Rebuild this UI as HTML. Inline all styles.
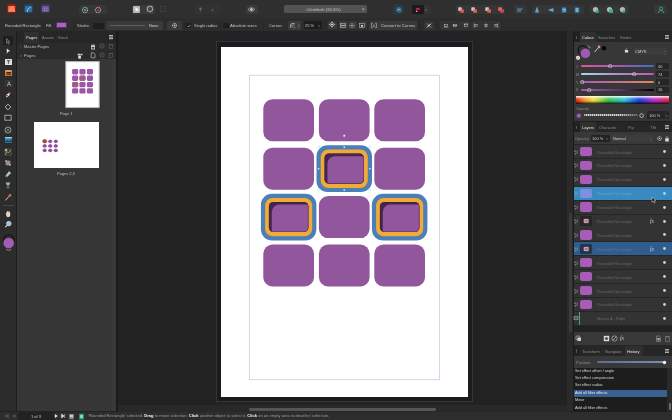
<!DOCTYPE html><html><head><meta charset="utf-8"><style>
html,body{margin:0;padding:0;width:672px;height:420px;overflow:hidden;background:#222;font-family:"Liberation Sans",sans-serif}
div,span,svg{position:absolute;box-sizing:border-box}
.t{white-space:pre;will-change:transform}
</style></head><body>
<div style="left:0px;top:0px;width:672px;height:18px;background:#2f2f2f;"></div>
<div style="left:0px;top:17.5px;width:672px;height:1px;background:#1d1d1d;"></div>
<div style="left:6.8px;top:4.2px;width:9.6px;height:9.2px;background:#9a1c1a;border-radius:1.5px"></div>
<div style="left:8.2px;top:5.6px;width:6.8px;height:6.6px;background:#e8703e;border-radius:0.5px"></div>
<svg style="left:8.6px;top:5.9px;" width="6.1" height="6.1" viewBox="0 0 6.1 6.1"><path d="M0 6 L3 0 L6 6 M1.5 3 L4.5 3 M1 4.5 L5 4.5" stroke="#ffb080" stroke-width="0.6" fill="none"/></svg>
<div style="left:24px;top:4.2px;width:9.4px;height:9.2px;background:#1f4466;border-radius:1.5px"></div>
<div style="left:25.3px;top:5.5px;width:6.8px;height:6.6px;background:#346f9c;border-radius:0.8px"></div>
<svg style="left:25.5px;top:5.5px;" width="6.5" height="6.5" viewBox="0 0 6.5 6.5"><path d="M1 6 Q1 2 5 1" stroke="#9fd5f5" stroke-width="0.8" fill="none"/></svg>
<div style="left:40.8px;top:4.2px;width:9.4px;height:9.2px;background:#3e3560;border-radius:1.5px"></div>
<div style="left:42.1px;top:5.5px;width:6.8px;height:6.6px;background:#5e4c86;border-radius:0.8px"></div>
<svg style="left:42px;top:5.5px;" width="7" height="6.5" viewBox="0 0 7 6.5"><path d="M0 2.2H7M0 4.4H7M2.3 0V6.5M4.6 0V6.5" stroke="#a98bd0" stroke-width="0.5"/></svg>
<div style="left:79px;top:4.8px;width:27.5px;height:9px;background:#373737;border-radius:1.5px"></div>
<svg style="left:81px;top:5.5px;" width="8" height="8" viewBox="0 0 8 8"><circle cx="4" cy="4" r="2.6" fill="none" stroke="#a8b8b0" stroke-width="1.1" stroke-dasharray="1 0.6"/><circle cx="4" cy="4" r="1.3" fill="#3a9c78"/></svg>
<svg style="left:94.3px;top:5.5px;" width="8" height="8" viewBox="0 0 8 8"><circle cx="4" cy="4" r="2.6" fill="none" stroke="#b8a8b0" stroke-width="1.1" stroke-dasharray="1 0.6"/><circle cx="4" cy="4" r="1.3" fill="#983048"/></svg>
<div style="left:131.8px;top:4.8px;width:23px;height:9px;background:#3a3a3a;border-radius:1.5px"></div>
<div style="left:133px;top:5.6px;width:7.4px;height:7.4px;background:#b8b8b8;border-radius:1px"></div>
<svg style="left:133.7px;top:6.2px;" width="6" height="6.5" viewBox="0 0 6 6.5"><path d="M1.5 1.2 L4.8 3.4 L3.3 3.8 L4.2 5.3 L1.5 4.8Z" fill="#f8f8f8"/></svg>
<div style="left:145.6px;top:5.4px;width:7.8px;height:7.8px;background:#444;border-radius:1px"></div>
<svg style="left:145.5px;top:5.3px;" width="8" height="8" viewBox="0 0 8 8"><circle cx="4" cy="4" r="2.7" fill="none" stroke="#d0d0d0" stroke-width="1.1" stroke-dasharray="1 0.5"/><circle cx="4" cy="4" r="1.5" fill="#4a4a4a"/></svg>
<svg style="left:159px;top:5.3px;" width="8" height="8" viewBox="0 0 8 8"><rect x="1.5" y="1.5" width="5" height="5" fill="none" stroke="#404040" stroke-width="0.8"/></svg>
<div style="left:194px;top:4.8px;width:25.5px;height:9px;background:#323232;border-radius:1.5px"></div>
<svg style="left:196.5px;top:5.5px;" width="7" height="7" viewBox="0 0 7 7"><circle cx="3.5" cy="2.8" r="1.3" fill="#6a6a6a"/><path d="M3.5 3.5V6" stroke="#6a6a6a" stroke-width="0.6"/></svg>
<svg style="left:209px;top:5.5px;" width="7" height="7" viewBox="0 0 7 7"><circle cx="3.5" cy="4.2" r="1" fill="#5c5c5c"/></svg>
<div style="left:245.5px;top:5px;width:12.5px;height:9px;background:#3b3b3b;border-radius:1.5px"></div>
<svg style="left:247px;top:6px;" width="9" height="7" viewBox="0 0 9 7"><path d="M1 3.5 Q4.5 0 8 3.5 Q4.5 7 1 3.5Z" fill="none" stroke="#c8c8c8" stroke-width="0.6"/><circle cx="4.5" cy="3.5" r="1.2" fill="#e0e0e0"/></svg>
<div style="left:283.5px;top:5.2px;width:83px;height:8.2px;background:#535353;border-radius:1.5px"></div>
<span class="t" style="left:305.5px;top:7px;font-size:4.15px;line-height:5px;color:#c4c4c4;font-weight:normal;">&lt;Untitled&gt; (65.6%)</span>
<span class="t" style="left:362px;top:7px;font-size:4.5px;line-height:5px;color:#b8b8b8;font-weight:normal;">×</span>
<div style="left:393.4px;top:5px;width:10.5px;height:9px;background:#2e3840;border-radius:1.5px"></div>
<svg style="left:394.5px;top:5.8px;" width="8" height="7.5" viewBox="0 0 8 7.5"><circle cx="4" cy="3.8" r="2.8" fill="#2b6f95"/><path d="M2.8 4.5 L4.2 3 L5.3 4.2" stroke="#cfe6f0" stroke-width="0.6" fill="none"/></svg>
<div style="left:412px;top:5px;width:12px;height:9px;background:#1b1b1b;border-radius:1px"></div>
<svg style="left:413.5px;top:5.8px;" width="8" height="7.5" viewBox="0 0 8 7.5"><path d="M2 5.5 Q1 2 4 1.8 Q6.5 2 5.5 4.2 L4.2 4 Q5 2.8 4 2.9 Q2.6 3 3.4 5.5Z" fill="#d82840"/><path d="M2 5.5 L3.4 5.5" stroke="#eee" stroke-width="0.7"/></svg>
<div style="left:424px;top:5px;width:6px;height:9px;background:#353535;border-radius:0 1px 1px 0"></div>
<span class="t" style="left:425.4px;top:8px;font-size:3.5px;line-height:5px;color:#888;font-weight:normal;">˅</span>
<div style="left:456px;top:4.8px;width:49px;height:9.2px;background:#363636;border-radius:1.5px"></div>
<svg style="left:457px;top:5.5px;" width="8" height="8" viewBox="0 0 8 8"><rect x="1.3" y="1.3" width="3.6" height="3.6" rx="0.6" fill="#c8c8c8"/><rect x="3.3" y="3.2" width="3.6" height="3.6" rx="0.6" fill="#e05a5a"/></svg>
<svg style="left:470.3px;top:5.5px;" width="8" height="8" viewBox="0 0 8 8"><rect x="1.3" y="1.3" width="3.6" height="3.6" rx="0.6" fill="#c8c8c8"/><rect x="3.3" y="3.2" width="3.6" height="3.6" rx="0.6" fill="#e86050"/></svg>
<svg style="left:483.5px;top:5.5px;" width="8" height="8" viewBox="0 0 8 8"><rect x="1.3" y="1.3" width="3.6" height="3.6" rx="0.6" fill="#c8c8c8"/><rect x="3.3" y="3.2" width="3.6" height="3.6" rx="0.6" fill="#f06040"/></svg>
<svg style="left:496.5px;top:5.5px;" width="8" height="8" viewBox="0 0 8 8"><rect x="1.3" y="1.3" width="3.6" height="3.6" rx="0.6" fill="#e06a6a"/><rect x="3.3" y="3.2" width="3.6" height="3.6" rx="0.6" fill="#d04a4a"/></svg>
<div style="left:513.5px;top:4.8px;width:13px;height:9.2px;background:#363636;border-radius:1.5px"></div>
<svg style="left:515.5px;top:5.5px;" width="8" height="8" viewBox="0 0 8 8"><path d="M1.5 1.5V6.5" stroke="#888" stroke-width="0.5"/><rect x="2" y="2.5" width="4.5" height="1.2" fill="#3d9ac8"/><rect x="2" y="4.5" width="3" height="1.2" fill="#3d9ac8"/></svg>
<div style="left:531.5px;top:4.8px;width:52px;height:9.2px;background:#363636;border-radius:1.5px"></div>
<svg style="left:533.3px;top:5.5px;" width="8" height="8" viewBox="0 0 8 8"><path d="M4 1.3 L6.5 6.5 L1.5 6.5Z" fill="#3e8fbf"/><path d="M4 1.3 L4 6.5" stroke="#ddd" stroke-width="0.5"/></svg>
<svg style="left:547.4px;top:5.5px;" width="8" height="8" viewBox="0 0 8 8"><path d="M6.5 1.5 L1.5 4 L6.5 6.5Z" fill="#3e8fbf"/><path d="M6.5 4 L1.5 4" stroke="#ddd" stroke-width="0.5"/></svg>
<svg style="left:560px;top:5.5px;" width="8" height="8" viewBox="0 0 8 8"><rect x="1.8" y="1.5" width="4.4" height="5" fill="#3b8fc4"/><path d="M3 3.5 L5 3.5 L5 5.5" stroke="#dfe" stroke-width="0.5" fill="none"/></svg>
<svg style="left:572.7px;top:5.5px;" width="8" height="8" viewBox="0 0 8 8"><rect x="1.8" y="1.5" width="4.4" height="5" fill="#3b8fc4"/><path d="M4 2 L4 6" stroke="#dfe" stroke-width="0.6"/></svg>
<div style="left:590px;top:4.8px;width:39px;height:9.2px;background:#363636;border-radius:1.5px"></div>
<svg style="left:592px;top:5.5px;" width="8" height="8" viewBox="0 0 8 8"><circle cx="3.5" cy="3.6" r="2.6" fill="#b8b8b8"/><rect x="3.8" y="4" width="3" height="2.8" fill="#2fb887"/></svg>
<svg style="left:606px;top:5.5px;" width="8" height="8" viewBox="0 0 8 8"><circle cx="3.5" cy="3.6" r="2.6" fill="#b8b8b8"/><rect x="3" y="3.3" width="4" height="3.6" fill="#2fb887"/></svg>
<svg style="left:619px;top:5.5px;" width="8" height="8" viewBox="0 0 8 8"><circle cx="3.5" cy="3.6" r="2.6" fill="#b8b8b8"/><path d="M3.6 6.8 A2.6 2.6 0 0 0 6.4 4 L3.6 4Z" fill="#2fb887"/></svg>
<div style="left:654px;top:4.8px;width:12.5px;height:9.2px;background:#383838;border-radius:1.5px"></div>
<svg style="left:656.5px;top:5.5px;" width="8" height="8" viewBox="0 0 8 8"><circle cx="4" cy="2.7" r="1.6" fill="none" stroke="#3fb88a" stroke-width="0.7"/><path d="M1.3 7 Q1.5 4.4 4 4.4 Q6.5 4.4 6.7 7" fill="none" stroke="#3fb88a" stroke-width="0.7"/></svg>
<div style="left:0px;top:18px;width:672px;height:13px;background:#2c2c2c;"></div>
<div style="left:0px;top:30.6px;width:672px;height:1px;background:#1e1e1e;"></div>
<span class="t" style="left:4.6px;top:23px;font-size:4.05px;line-height:5px;color:#c4c4c4;font-weight:normal;">Rounded Rectangle</span>
<div style="left:43.3px;top:20.5px;width:0.8px;height:9.5px;background:#262626;"></div>
<span class="t" style="left:46.2px;top:23px;font-size:4.05px;line-height:5px;color:#c4c4c4;font-weight:normal;">Fill:</span>
<div style="left:56.2px;top:22.2px;width:11px;height:6px;background:#a862c2;border-radius:1px;border:0.5px solid #5a2f6a"></div>
<div style="left:67px;top:22px;width:4.5px;height:6.5px;background:#283030;border-radius:0 1px 1px 0"></div>
<div style="left:74px;top:20.5px;width:0.8px;height:9.5px;background:#262626;"></div>
<span class="t" style="left:77px;top:23px;font-size:4.05px;line-height:5px;color:#c4c4c4;font-weight:normal;">Stroke:</span>
<div style="left:93.3px;top:22.6px;width:10.8px;height:6px;background:#1e1e1e;border-radius:1px"></div>
<div style="left:106.4px;top:20.7px;width:56.5px;height:8.9px;background:#3a3a3a;border-radius:1.5px"></div>
<div style="left:110px;top:25.2px;width:34.5px;height:0.6px;background:#5e5e5e;"></div>
<div style="left:125.2px;top:24.6px;width:0.8px;height:1.6px;background:#b23a4a;"></div>
<span class="t" style="left:149px;top:23px;font-size:3.95px;line-height:5px;color:#d0d0d0;font-weight:normal;">None</span>
<div style="left:166.5px;top:20.7px;width:15px;height:8.9px;background:#3a3a3a;border-radius:1.5px"></div>
<svg style="left:170.5px;top:21.8px;" width="7" height="7" viewBox="0 0 7 7"><circle cx="3.5" cy="3.5" r="2" fill="none" stroke="#e8e8e8" stroke-width="1" stroke-dasharray="0.8 0.5"/><circle cx="3.5" cy="3.5" r="0.8" fill="#e8e8e8"/></svg>
<div style="left:183.5px;top:20.5px;width:0.8px;height:9.5px;background:#262626;"></div>
<div style="left:185.5px;top:22.5px;width:5.6px;height:5.8px;background:#1e1e1e;border-radius:0.8px"></div>
<svg style="left:185.5px;top:22.5px;" width="5.6" height="5.8" viewBox="0 0 5.6 5.8"><path d="M1.6 3.1 L2.5 4 L4.2 1.9" stroke="#e0e0e0" stroke-width="0.6" fill="none"/></svg>
<span class="t" style="left:194px;top:23px;font-size:4.05px;line-height:5px;color:#c4c4c4;font-weight:normal;">Single radius</span>
<div style="left:220.2px;top:20.5px;width:0.8px;height:9.5px;background:#262626;"></div>
<div style="left:223px;top:22.5px;width:5.6px;height:5.8px;background:#1e1e1e;border-radius:0.8px"></div>
<span class="t" style="left:230.3px;top:23px;font-size:4.15px;line-height:5px;color:#c4c4c4;font-weight:normal;">Absolute sizes</span>
<div style="left:263.3px;top:20.5px;width:0.8px;height:9.5px;background:#262626;"></div>
<span class="t" style="left:269px;top:23px;font-size:4.15px;line-height:5px;color:#c4c4c4;font-weight:normal;">Corner:</span>
<div style="left:287.8px;top:20.7px;width:13px;height:8.9px;background:#3b3b3b;border-radius:1.5px"></div>
<svg style="left:288.5px;top:21.5px;" width="8" height="7" viewBox="0 0 8 7"><path d="M1.5 5.5 L1.5 3.5 Q1.5 1.5 3.5 1.5 L5.5 1.5" stroke="#dcdcdc" stroke-width="0.7" fill="none"/><path d="M3 5.5 L3 4 Q3 3 4 3 L5.5 3 M4.5 5.5 L6 5.5" stroke="#dcdcdc" stroke-width="0.5" fill="none"/></svg>
<span class="t" style="left:297.7px;top:23px;font-size:2.6px;line-height:5px;color:#8a8a8a;font-weight:normal;">˄</span>
<span class="t" style="left:297.7px;top:25px;font-size:2.6px;line-height:5px;color:#8a8a8a;font-weight:normal;">˅</span>
<div style="left:303.8px;top:20.9px;width:18.6px;height:8.5px;background:#1d1d1d;border-radius:1px"></div>
<span class="t" style="left:305px;top:23px;font-size:4.0px;line-height:5px;color:#d0d0d0;font-weight:normal;">25 %</span>
<span class="t" style="left:317.6px;top:24px;font-size:3.4px;line-height:5px;color:#909090;font-weight:normal;">˅</span>
<div style="left:324.3px;top:20.5px;width:0.8px;height:9.5px;background:#262626;"></div>
<div style="left:328.2px;top:20.8px;width:8.4px;height:7.8px;background:#393939;border-radius:1px"></div>
<div style="left:339.3px;top:20.8px;width:8.4px;height:7.8px;background:#393939;border-radius:1px"></div>
<div style="left:348.8px;top:20.8px;width:8.4px;height:7.8px;background:#393939;border-radius:1px"></div>
<div style="left:358.6px;top:20.8px;width:8.4px;height:7.8px;background:#393939;border-radius:1px"></div>
<svg style="left:328.4px;top:21.2px;" width="8" height="7" viewBox="0 0 8 7"><path d="M4 0.9 L6.6 3.5 L4 6.1 L1.4 3.5Z" fill="none" stroke="#e0e0e0" stroke-width="0.6"/><path d="M4 0.4V6.6M0.9 3.5H7.1" stroke="#d0d0d0" stroke-width="0.45"/><circle cx="4" cy="3.5" r="0.7" fill="#e8e8e8"/></svg>
<svg style="left:338.5px;top:21.5px;" width="8" height="7" viewBox="0 0 8 7"><rect x="1.5" y="1.3" width="5" height="4.4" fill="none" stroke="#d0d0d0" stroke-width="0.5"/><path d="M1.5 3.5 H6.5 M2.5 2.4 L3.5 3.5 L2.5 4.6 M5.5 2.4 L4.5 3.5 L5.5 4.6" stroke="#e0e0e0" stroke-width="0.5" fill="none"/></svg>
<svg style="left:348.2px;top:21.5px;" width="8" height="7" viewBox="0 0 8 7"><path d="M4 1V6 M1.5 3.5H6.5" stroke="#d0d0d0" stroke-width="0.5"/><rect x="1.5" y="1.3" width="5" height="4.4" fill="none" stroke="#a0a0a0" stroke-width="0.4" stroke-dasharray="0.6 0.5"/></svg>
<svg style="left:357.8px;top:21.5px;" width="8" height="7" viewBox="0 0 8 7"><rect x="1.5" y="1.3" width="5" height="4.4" fill="none" stroke="#c8c8c8" stroke-width="0.5"/><rect x="3.1" y="3" width="1.8" height="1.8" fill="#e0e0e0"/></svg>
<div style="left:368.8px;top:20.7px;width:48px;height:8.9px;background:#393939;border-radius:1.5px"></div>
<svg style="left:369.7px;top:21.5px;" width="8" height="7" viewBox="0 0 8 7"><path d="M1.5 1.3H3M5 1.3H6.5V5.7H5M3 5.7H1.5V1.3" stroke="#cfcfcf" stroke-width="0.5" fill="none"/><path d="M4 2.3V4.7M3.2 3.9L4 4.7L4.8 3.9" stroke="#e0e0e0" stroke-width="0.5" fill="none"/></svg>
<span class="t" style="left:380.6px;top:23px;font-size:4.25px;line-height:5px;color:#c8c8c8;font-weight:normal;">Convert to Curves</span>
<div style="left:419.2px;top:20.5px;width:0.8px;height:9.5px;background:#262626;"></div>
<div style="left:423.5px;top:20.7px;width:10px;height:8.9px;background:#353535;border-radius:1.5px"></div>
<svg style="left:424.5px;top:21.5px;" width="8" height="7" viewBox="0 0 8 7"><path d="M1.5 1.5 L6.5 5.5 M6.5 1.5 L1.5 5.5" stroke="#c8c8c8" stroke-width="0.5"/><path d="M2.5 4.8 L5.5 2.2" stroke="#e8e8e8" stroke-width="1"/></svg>
<div style="left:437px;top:20.5px;width:0.8px;height:9.5px;background:#262626;"></div>
<div style="left:440.3px;top:20.7px;width:30px;height:8.9px;background:#333333;border-radius:1.5px"></div>
<div style="left:471.3px;top:20.7px;width:30px;height:8.9px;background:#333333;border-radius:1.5px"></div>
<svg style="left:441.5px;top:21.5px;" width="8" height="7" viewBox="0 0 8 7"><path d="M1.6 5.2H6.4" stroke="#c8c8c8" stroke-width="0.5"/><rect x="2.6" y="2.3" width="2.8" height="2.3" fill="none" stroke="#d0d0d0" stroke-width="0.5"/></svg>
<svg style="left:451.1px;top:21.5px;" width="8" height="7" viewBox="0 0 8 7"><path d="M1.6 3.5H6.4" stroke="#c8c8c8" stroke-width="0.5"/><rect x="2.6" y="2.3" width="2.8" height="2.3" fill="none" stroke="#d0d0d0" stroke-width="0.5"/></svg>
<svg style="left:461.6px;top:21.5px;" width="8" height="7" viewBox="0 0 8 7"><path d="M1.6 1.8H6.4" stroke="#c8c8c8" stroke-width="0.5"/><rect x="2.6" y="2.3" width="2.8" height="2.3" fill="none" stroke="#d0d0d0" stroke-width="0.5"/></svg>
<svg style="left:471.5px;top:21.5px;" width="8" height="7" viewBox="0 0 8 7"><path d="M2.2 1.2V5.8" stroke="#c8c8c8" stroke-width="0.5"/><rect x="2.9" y="2.3" width="2.2" height="2.4" fill="none" stroke="#d0d0d0" stroke-width="0.5"/></svg>
<svg style="left:482px;top:21.5px;" width="8" height="7" viewBox="0 0 8 7"><path d="M4 1.2V5.8" stroke="#c8c8c8" stroke-width="0.5"/><rect x="2.9" y="2.3" width="2.2" height="2.4" fill="none" stroke="#d0d0d0" stroke-width="0.5"/></svg>
<svg style="left:492px;top:21.5px;" width="8" height="7" viewBox="0 0 8 7"><path d="M5.8 1.2V5.8" stroke="#c8c8c8" stroke-width="0.5"/><rect x="2.9" y="2.3" width="2.2" height="2.4" fill="none" stroke="#d0d0d0" stroke-width="0.5"/></svg>
<div style="left:0px;top:31px;width:16px;height:380px;background:#2c2c2c;"></div>
<div style="left:16px;top:31px;width:1px;height:380px;background:#1e1e1e;"></div>
<div style="left:3px;top:36px;width:10px;height:8.6px;background:#1e1e1e;border-radius:1px"></div>
<svg style="left:4px;top:36.5px;" width="8" height="8" viewBox="0 0 8 8"><path d="M2.5 1.5 L6 4.8 L4.4 5 L5.3 6.8 L4.5 7.1 L3.6 5.3 L2.5 6.3Z" fill="#3a3a3a" stroke="#9a9a9a" stroke-width="0.55"/></svg>
<svg style="left:4px;top:46.5px;" width="8" height="8" viewBox="0 0 8 8"><path d="M2.8 1.5 L6.3 4.2 L4.3 4.6 L2.8 6.8Z" fill="#e8e8e8"/></svg>
<div style="left:5px;top:58.8px;width:7px;height:6px;background:#d8d8d8;border-radius:0.5px"></div>
<svg style="left:5px;top:58.8px;" width="7" height="6" viewBox="0 0 7 6"><path d="M1.8 1.6H5.2M3.5 1.6V4.8" stroke="#555" stroke-width="0.9"/><path d="M0.6 0.6H6.4V5.4H0.6Z" fill="none" stroke="#f4f4f4" stroke-width="0.4"/></svg>
<div style="left:5px;top:69.6px;width:7px;height:6.4px;background:#c4843a;border-radius:0.5px"></div>
<svg style="left:5px;top:69.6px;" width="7" height="6.4" viewBox="0 0 7 6.4"><rect x="1.5" y="2" width="4.5" height="1.6" fill="#3a2a1a"/><rect x="1.5" y="4.2" width="4.5" height="1" fill="#6a2020"/><rect x="0.5" y="0.5" width="6" height="1" fill="#e8b070"/></svg>
<svg style="left:4.5px;top:79.8px;" width="8" height="7.5" viewBox="0 0 8 7.5"><rect x="0.8" y="0.8" width="6.4" height="5.9" fill="none" stroke="#777" stroke-width="0.4" stroke-dasharray="0.8 0.6"/><path d="M2.2 6 L4 1.6 L5.8 6 M2.9 4.4H5.1" stroke="#d0d0d0" stroke-width="0.6" fill="none"/></svg>
<svg style="left:4px;top:91px;" width="8" height="8" viewBox="0 0 8 8"><path d="M2 6.5 L2.8 3.6 L5.2 1.6 L6.4 2.8 L4.4 5.2 Z" fill="#e4e4e4"/><circle cx="5.8" cy="2" r="1.1" fill="#c03a3a"/><circle cx="3.5" cy="4.6" r="0.5" fill="#333"/></svg>
<svg style="left:4px;top:102.5px;" width="9" height="8.5" viewBox="0 0 9 8.5"><path d="M4 1.2 L6.8 4 L4 6.8 L1.2 4Z" fill="none" stroke="#d8d8d8" stroke-width="0.8"/><circle cx="4" cy="4" r="1" fill="#222"/><path d="M7.2 7.6 L8.2 6.4" stroke="#4a7a55" stroke-width="0.7"/></svg>
<svg style="left:4.2px;top:114.3px;" width="8" height="7.5" viewBox="0 0 8 7.5"><rect x="0.9" y="1.2" width="6.2" height="5" fill="none" stroke="#bdbdbd" stroke-width="0.8"/><path d="M2.2 3 L5 4.8" stroke="#2a2a2a" stroke-width="1.2"/></svg>
<svg style="left:4.2px;top:125.5px;" width="8" height="8" viewBox="0 0 8 8"><circle cx="4" cy="4" r="3" fill="none" stroke="#c0c0c0" stroke-width="0.7"/><path d="M2.3 2.3 L5.7 5.7 M5.7 2.3 L2.3 5.7" stroke="#aaa" stroke-width="0.55"/></svg>
<div style="left:4.7px;top:137.3px;width:7px;height:5.6px;background:#3a86ad;border-radius:0.5px"></div>
<svg style="left:4.7px;top:137.3px;" width="7" height="5.6" viewBox="0 0 7 5.6"><path d="M0 4.2 L2 2.8 L4 3.8 L7 2.2 V5.6 H0Z" fill="#1f4d6a"/><rect x="0" y="0" width="7" height="1.2" fill="#8fd0ea"/></svg>
<svg style="left:4.3px;top:148px;" width="8" height="8" viewBox="0 0 8 8"><rect x="1" y="1" width="6" height="6" fill="none" stroke="#7a8a5a" stroke-width="0.5"/><path d="M1.5 6.5 L3 3.5 L4.5 5 L6.5 2" stroke="#c8c8a0" stroke-width="0.7" fill="none"/><rect x="1" y="1" width="2.2" height="2.2" fill="#b0b090"/></svg>
<svg style="left:4.3px;top:159px;" width="8" height="8" viewBox="0 0 8 8"><path d="M2.2 1 V5.8 H7 M1 2.2 H5.8 V7" stroke="#d4d4d4" stroke-width="0.75" fill="none"/><rect x="2.7" y="2.7" width="2.6" height="2.6" fill="#9a9a9a"/></svg>
<svg style="left:4.3px;top:170px;" width="8" height="8" viewBox="0 0 8 8"><path d="M1.5 5.5 L4.8 1.5 L6.8 3.3 L3.3 7Z" fill="#a8c8b0"/><path d="M4.8 1.5 L6.8 3.3" stroke="#e8e8e8" stroke-width="0.8"/><circle cx="2" cy="6.4" r="0.8" fill="#4a9a8a"/></svg>
<svg style="left:4.3px;top:181px;" width="8" height="8" viewBox="0 0 8 8"><path d="M1.5 1.5 H6.5 L5 4.5 H3Z" fill="#a0b4b8"/><path d="M4 4.5 V6.8 M2.4 6.8 H5.6" stroke="#9aa" stroke-width="0.6"/></svg>
<svg style="left:4.3px;top:192.5px;" width="8" height="9" viewBox="0 0 8 9"><path d="M1.4 7.4 L5.2 3.2" stroke="#e0e0e0" stroke-width="0.9"/><circle cx="6" cy="2.4" r="1.3" fill="#d87050"/><path d="M6.6 7.3 L7.6 6.4" stroke="#777" stroke-width="0.4"/></svg>
<div style="left:2.5px;top:204.6px;width:11px;height:0.6px;background:#474747;"></div>
<svg style="left:4.3px;top:209.5px;" width="8" height="8.5" viewBox="0 0 8 8.5"><path d="M2 4.5 Q1.5 2.5 2.8 2.3 L3 1.4 Q3.8 0.8 4.4 1.5 L5.2 1.6 Q6.2 1.9 6.1 3 L6.3 5 Q6 7.3 4 7.3 Q2.3 7 2 4.5Z" fill="#e2dccd"/><path d="M2.8 2.3 L3 4 M4.4 1.5 L4.4 3.6" stroke="#8a8070" stroke-width="0.3"/></svg>
<svg style="left:4.3px;top:220px;" width="8" height="8.5" viewBox="0 0 8 8.5"><circle cx="4.8" cy="3.6" r="2.3" fill="#9fc5d8" stroke="#d8e8f0" stroke-width="0.6"/><path d="M3.2 5.3 L1.3 7.2" stroke="#e0e0e0" stroke-width="1.1"/></svg>
<svg style="left:1.5px;top:232px;" width="14" height="22" viewBox="0 0 14 22"><circle cx="6.8" cy="8.2" r="5.3" fill="none" stroke="#161616" stroke-width="1.2"/><circle cx="6.7" cy="11.1" r="5.3" fill="#9f5db3"/><path d="M4.8 17.6 Q6.7 19.3 8.6 17.6" stroke="#c8c8c8" stroke-width="0.55" fill="none"/><path d="M4.3 17.2 L4.8 17.8 L5.4 17.3 M8 17.3 L8.6 17.8 L9.1 17.2" stroke="#c8c8c8" stroke-width="0.45" fill="none"/></svg>
<div style="left:17px;top:31px;width:99px;height:380px;background:#363636;"></div>
<div style="left:111.5px;top:59px;width:4.5px;height:352px;background:#393939;"></div>
<div style="left:116px;top:31px;width:1.5px;height:380px;background:#1a1a1a;"></div>
<div style="left:17px;top:31px;width:99px;height:12px;background:#262626;"></div>
<div style="left:23.5px;top:32px;width:15.5px;height:10.6px;background:#303030;border-radius:1px 1px 0 0"></div>
<span class="t" style="left:25.6px;top:35px;font-size:4.0px;line-height:5px;color:#e0e0e0;font-weight:normal;">Pages</span>
<div style="left:40.5px;top:33.5px;width:0.6px;height:8px;background:#2b2b2b;"></div>
<span class="t" style="left:42px;top:35px;font-size:4.0px;line-height:5px;color:#8c8c8c;font-weight:normal;">Assets</span>
<div style="left:56px;top:33.5px;width:0.6px;height:8px;background:#2b2b2b;"></div>
<span class="t" style="left:58.3px;top:35px;font-size:4.0px;line-height:5px;color:#8c8c8c;font-weight:normal;">Stock</span>
<svg style="left:108px;top:33.5px;" width="6" height="6" viewBox="0 0 6 6"><rect x="1" y="1" width="4" height="1" fill="#bdbdbd"/><rect x="1" y="2.6" width="4" height="1" fill="#bdbdbd"/><rect x="1" y="4.2" width="4" height="1" fill="#bdbdbd"/></svg>
<div style="left:17px;top:43px;width:99px;height:7.6px;background:#2b2b2b;"></div>
<div style="left:17px;top:50.6px;width:99px;height:0.8px;background:#1f1f1f;"></div>
<span class="t" style="left:20px;top:45px;font-size:3.6px;line-height:5px;color:#8a8a8a;font-weight:normal;">›</span>
<span class="t" style="left:24px;top:44px;font-size:4.05px;line-height:5px;color:#c0c0c0;font-weight:normal;">Master Pages</span>
<svg style="left:90px;top:43.5px;" width="6" height="6" viewBox="0 0 6 6"><rect x="1" y="1.5" width="4" height="4" fill="#cfcfcf"/><rect x="1.6" y="0.5" width="1" height="1.5" fill="#cfcfcf"/><rect x="3.4" y="0.5" width="1" height="1.5" fill="#cfcfcf"/><rect x="1.6" y="3" width="2.8" height="1.6" fill="#444"/></svg>
<svg style="left:98.5px;top:43.2px;" width="6" height="6" viewBox="0 0 6 6"><circle cx="3" cy="3" r="2.2" fill="none" stroke="#6a6a6a" stroke-width="0.6"/><path d="M1.8 3.8 L4.2 2.2" stroke="#6a6a6a" stroke-width="0.5"/></svg>
<svg style="left:107.5px;top:43.2px;" width="6" height="6" viewBox="0 0 6 6"><rect x="1.3" y="1.6" width="3.4" height="4" fill="none" stroke="#5e5e5e" stroke-width="0.55"/><rect x="0.9" y="1" width="4.2" height="0.6" fill="#5e5e5e"/></svg>
<div style="left:17px;top:51.4px;width:99px;height:7.6px;background:#2b2b2b;"></div>
<span class="t" style="left:20px;top:54px;font-size:3.2px;line-height:5px;color:#8a8a8a;font-weight:normal;">˅</span>
<span class="t" style="left:24px;top:53px;font-size:4.05px;line-height:5px;color:#c0c0c0;font-weight:normal;">Pages</span>
<svg style="left:77px;top:52.5px;" width="6" height="6" viewBox="0 0 6 6"><rect x="0.6" y="0.8" width="2.6" height="1.4" fill="#d8d8d8"/><rect x="3.5" y="0.8" width="2" height="1.4" fill="#d8d8d8"/><rect x="1.3" y="2.6" width="2.6" height="3" fill="#e8e8e8"/></svg>
<svg style="left:90px;top:52.3px;" width="6" height="6.5" viewBox="0 0 6 6.5"><path d="M1.2 0.8 H3.8 L5 2 V5.8 H1.2Z" fill="none" stroke="#cfcfcf" stroke-width="0.6"/></svg>
<svg style="left:98.5px;top:52.3px;" width="6" height="6" viewBox="0 0 6 6"><circle cx="3" cy="3" r="2.2" fill="none" stroke="#6a6a6a" stroke-width="0.6"/><path d="M1.8 3.8 L4.2 2.2" stroke="#6a6a6a" stroke-width="0.5"/></svg>
<svg style="left:107.5px;top:52.3px;" width="6" height="6" viewBox="0 0 6 6"><rect x="1.3" y="1.6" width="3.4" height="4" fill="none" stroke="#5e5e5e" stroke-width="0.55"/><rect x="0.9" y="1" width="4.2" height="0.6" fill="#5e5e5e"/></svg>
<svg style="left:63px;top:59px;" width="40" height="52" viewBox="0 0 40 52"><rect x="1.8" y="1.6" width="35.4" height="48" rx="1" fill="#222"/><rect x="2.8" y="2.6" width="33.4" height="46" fill="#ffffff" stroke="#b8b8b8" stroke-width="1.1"/></svg>
<svg style="left:60px;top:60px;" width="40" height="40" viewBox="0 0 40 40"><rect x="12.10" y="9.10" width="6.1" height="5.3" rx="1.3" fill="#9a55a8"/><rect x="19.40" y="9.10" width="6.1" height="5.3" rx="1.3" fill="#9a55a8"/><rect x="26.90" y="9.10" width="6.1" height="5.3" rx="1.3" fill="#9a55a8"/><rect x="12.10" y="15.60" width="6.1" height="5.3" rx="1.3" fill="#9a55a8"/><rect x="19.40" y="15.60" width="6.1" height="5.3" rx="1.3" fill="#9a55a8"/><rect x="19.80" y="16.00" width="5.3" height="4.5" rx="1.1" fill="none" stroke="#a8704a" stroke-width="0.8"/><rect x="26.90" y="15.60" width="6.1" height="5.3" rx="1.3" fill="#9a55a8"/><rect x="12.10" y="22.00" width="6.1" height="5.3" rx="1.3" fill="#9a55a8"/><rect x="12.50" y="22.40" width="5.3" height="4.5" rx="1.1" fill="none" stroke="#a8704a" stroke-width="0.8"/><rect x="19.40" y="22.00" width="6.1" height="5.3" rx="1.3" fill="#9a55a8"/><rect x="26.90" y="22.00" width="6.1" height="5.3" rx="1.3" fill="#9a55a8"/><rect x="12.10" y="28.30" width="6.1" height="5.3" rx="1.3" fill="#9a55a8"/><rect x="19.40" y="28.30" width="6.1" height="5.3" rx="1.3" fill="#9a55a8"/><rect x="26.90" y="28.30" width="6.1" height="5.3" rx="1.3" fill="#9a55a8"/></svg>
<span class="t" style="left:60px;top:111px;font-size:3.9px;line-height:5px;color:#bdbdbd;font-weight:normal;">Page 1</span>
<div style="left:34px;top:122.3px;width:65px;height:46px;background:#ffffff;"></div>
<svg style="left:36px;top:130px;" width="30" height="30" viewBox="0 0 30 30"><path d="M6.10 11.30 Q6.75 9.58 8.70 9.00 Q10.65 9.58 11.30 11.30 Q10.65 13.03 8.70 13.60 Q6.75 13.03 6.10 11.30Z" fill="#b0483e"/><path d="M11.90 11.30 Q12.48 9.88 14.20 9.40 Q15.93 9.88 16.50 11.30 Q15.93 12.73 14.20 13.20 Q12.48 12.73 11.90 11.30Z" fill="#8f4f9e"/><path d="M17.50 11.30 Q18.07 9.88 19.80 9.40 Q21.52 9.88 22.10 11.30 Q21.52 12.73 19.80 13.20 Q18.07 12.73 17.50 11.30Z" fill="#8f4f9e"/><path d="M6.40 15.90 Q6.98 14.48 8.70 14.00 Q10.43 14.48 11.00 15.90 Q10.43 17.33 8.70 17.80 Q6.98 17.33 6.40 15.90Z" fill="#8f4f9e"/><path d="M11.90 15.90 Q12.48 14.48 14.20 14.00 Q15.93 14.48 16.50 15.90 Q15.93 17.33 14.20 17.80 Q12.48 17.33 11.90 15.90Z" fill="#8f4f9e"/><path d="M17.50 15.90 Q18.07 14.48 19.80 14.00 Q21.52 14.48 22.10 15.90 Q21.52 17.33 19.80 17.80 Q18.07 17.33 17.50 15.90Z" fill="#8f4f9e"/><path d="M6.40 20.40 Q6.98 18.98 8.70 18.50 Q10.43 18.98 11.00 20.40 Q10.43 21.83 8.70 22.30 Q6.98 21.83 6.40 20.40Z" fill="#8f4f9e"/><path d="M11.90 20.40 Q12.48 18.98 14.20 18.50 Q15.93 18.98 16.50 20.40 Q15.93 21.83 14.20 22.30 Q12.48 21.83 11.90 20.40Z" fill="#8f4f9e"/><path d="M17.50 20.40 Q18.07 18.98 19.80 18.50 Q21.52 18.98 22.10 20.40 Q21.52 21.83 19.80 22.30 Q18.07 21.83 17.50 20.40Z" fill="#8f4f9e"/></svg>
<span class="t" style="left:57.2px;top:171px;font-size:3.95px;line-height:5px;color:#bdbdbd;font-weight:normal;">Pages 2,3</span>
<div style="left:117.5px;top:31px;width:455px;height:380px;background:#222222;"></div>
<div style="left:567px;top:31px;width:5.5px;height:380px;background:#2a2a2a;"></div>
<div style="left:572.5px;top:31px;width:1px;height:381px;background:#1a1a1a;"></div>
<div style="left:215.8px;top:40.6px;width:257.4px;height:361.8px;background:#34353b;"></div>
<div style="left:217px;top:41.8px;width:255px;height:359.4px;background:#1c1c20;"></div>
<div style="left:221px;top:46.5px;width:247.2px;height:350.5px;background:#ffffff;"></div>
<svg style="left:0px;top:0px;" width="672" height="420" viewBox="0 0 672 420"><defs><filter id="sh" x="-20%" y="-20%" width="140%" height="140%"><feGaussianBlur stdDeviation="0.75"/></filter></defs><rect x="249.6" y="75.2" width="189.8" height="304.6" fill="none" stroke="#b4cde0" stroke-width="0.7"/><rect x="263.30" y="99.30" width="50.70" height="42.00" rx="9.30" fill="#91569b" /><rect x="318.90" y="99.30" width="50.70" height="42.00" rx="9.30" fill="#91569b" /><rect x="374.30" y="99.30" width="50.70" height="42.00" rx="9.30" fill="#91569b" /><rect x="263.30" y="147.70" width="50.70" height="42.00" rx="9.30" fill="#91569b" /><rect x="316.50" y="145.30" width="55.50" height="46.80" rx="11.20" fill="#4a7fb8" /><rect x="320.70" y="149.50" width="47.10" height="38.40" rx="7.60" fill="#f2a935" /><clipPath id="c11"><rect x="324.50" y="153.50" width="39.50" height="30.20" rx="4.50" fill="#000" /></clipPath><rect x="324.50" y="153.50" width="39.50" height="30.20" rx="4.50" fill="#442650" /><g clip-path="url(#c11)"><rect x="327.40" y="156.20" width="43.50" height="34.20" rx="7.50" fill="#91569b" filter="url(#sh)"/><rect x="324.50" y="153.50" width="39.50" height="30.20" rx="4.50" fill="none" stroke="#2e1a34" stroke-width="0.7"/></g><rect x="374.30" y="147.70" width="50.70" height="42.00" rx="9.30" fill="#91569b" /><rect x="260.90" y="193.70" width="55.50" height="46.80" rx="11.20" fill="#4a7fb8" /><rect x="265.10" y="197.90" width="47.10" height="38.40" rx="7.60" fill="#f2a935" /><clipPath id="c20"><rect x="268.90" y="201.90" width="39.50" height="30.20" rx="4.50" fill="#000" /></clipPath><rect x="268.90" y="201.90" width="39.50" height="30.20" rx="4.50" fill="#442650" /><g clip-path="url(#c20)"><rect x="271.80" y="204.60" width="43.50" height="34.20" rx="7.50" fill="#91569b" filter="url(#sh)"/><rect x="268.90" y="201.90" width="39.50" height="30.20" rx="4.50" fill="none" stroke="#2e1a34" stroke-width="0.7"/></g><rect x="318.90" y="196.10" width="50.70" height="42.00" rx="9.30" fill="#91569b" /><rect x="371.90" y="193.70" width="55.50" height="46.80" rx="11.20" fill="#4a7fb8" /><rect x="376.10" y="197.90" width="47.10" height="38.40" rx="7.60" fill="#f2a935" /><clipPath id="c22"><rect x="379.90" y="201.90" width="39.50" height="30.20" rx="4.50" fill="#000" /></clipPath><rect x="379.90" y="201.90" width="39.50" height="30.20" rx="4.50" fill="#442650" /><g clip-path="url(#c22)"><rect x="382.80" y="204.60" width="43.50" height="34.20" rx="7.50" fill="#91569b" filter="url(#sh)"/><rect x="379.90" y="201.90" width="39.50" height="30.20" rx="4.50" fill="none" stroke="#2e1a34" stroke-width="0.7"/></g><rect x="263.30" y="244.50" width="50.70" height="42.00" rx="9.30" fill="#91569b" /><rect x="318.90" y="244.50" width="50.70" height="42.00" rx="9.30" fill="#91569b" /><rect x="374.30" y="244.50" width="50.70" height="42.00" rx="9.30" fill="#91569b" /><path d="M344.25 136.20 V147.20" stroke="rgba(190,215,240,0.45)" stroke-width="0.3"/><circle cx="344.25" cy="135.70" r="0.9" fill="#f4eef8" stroke="#e0c8f0" stroke-width="0.4"/><circle cx="318.90" cy="147.20" r="1.1" fill="none" stroke="#9fd0ec" stroke-width="0.4"/><circle cx="369.60" cy="147.20" r="1.1" fill="none" stroke="#9fd0ec" stroke-width="0.4"/><circle cx="318.90" cy="190.00" r="1.1" fill="none" stroke="#9fd0ec" stroke-width="0.4"/><circle cx="369.60" cy="190.00" r="1.1" fill="none" stroke="#9fd0ec" stroke-width="0.4"/><circle cx="344.25" cy="147.20" r="0.8" fill="#e8f6ff" stroke="#9fd0ec" stroke-width="0.3"/><circle cx="344.25" cy="190.00" r="0.8" fill="#e8f6ff" stroke="#9fd0ec" stroke-width="0.3"/><circle cx="318.60" cy="168.70" r="0.8" fill="#e8f6ff" stroke="#9fd0ec" stroke-width="0.3"/><circle cx="369.90" cy="168.70" r="0.8" fill="#e8f6ff" stroke="#9fd0ec" stroke-width="0.3"/></svg>
<div style="left:569px;top:213px;width:2.7px;height:119px;background:#3b3b3b;border-radius:1.3px"></div>
<div style="left:117.5px;top:404.5px;width:449.5px;height:7px;background:#282828;"></div>
<div style="left:248.6px;top:408.3px;width:187px;height:2.6px;background:#555555;border-radius:1.3px"></div>
<div style="left:573.5px;top:31px;width:98.5px;height:381px;background:#363636;"></div>
<div style="left:573.5px;top:31px;width:98.5px;height:11.2px;background:#262626;"></div>
<div style="left:573.5px;top:32px;width:6px;height:10.2px;background:#212121;"></div>
<div style="left:576.2px;top:35.5px;width:0.6px;height:3.5px;background:#555;"></div>
<div style="left:580.3px;top:32px;width:15.7px;height:10.2px;background:#303030;border-radius:1px 1px 0 0"></div>
<span class="t" style="left:582.3px;top:35px;font-size:4.0px;line-height:5px;color:#e4e4e4;font-weight:normal;">Colour</span>
<div style="left:597px;top:33.5px;width:0.6px;height:8px;background:#2b2b2b;"></div>
<span class="t" style="left:598.3px;top:35px;font-size:4.0px;line-height:5px;color:#8a8a8a;font-weight:normal;">Swatches</span>
<div style="left:617.6px;top:33.5px;width:0.6px;height:8px;background:#2b2b2b;"></div>
<span class="t" style="left:620.3px;top:35px;font-size:4.0px;line-height:5px;color:#8a8a8a;font-weight:normal;">Stroke</span>
<svg style="left:663.5px;top:34px;" width="6" height="6" viewBox="0 0 6 6"><rect x="1" y="1" width="4" height="0.9" fill="#bdbdbd"/><rect x="1" y="2.55" width="4" height="0.9" fill="#bdbdbd"/><rect x="1" y="4.1" width="4" height="0.9" fill="#bdbdbd"/></svg>
<div style="left:573.5px;top:42.2px;width:98.5px;height:78.3px;background:#373737;"></div>
<svg style="left:0px;top:0px;" width="672" height="420" viewBox="0 0 672 420"><circle cx="582.6" cy="50.2" r="4.5" fill="none" stroke="#161616" stroke-width="1.4"/><circle cx="585.4" cy="53.4" r="4.8" fill="#9d5ab0"/><circle cx="578" cy="57.8" r="2.1" fill="#f0f0f0"/><path d="M576.6 59.2 L579.4 56.4" stroke="#c83030" stroke-width="0.7"/><path d="M587.2 45.6 Q589.4 45.6 589.8 48" stroke="#bdbdbd" stroke-width="0.5" fill="none"/><path d="M589.2 47.4 L589.8 48.3 L590.4 47.4" stroke="#bdbdbd" stroke-width="0.45" fill="none"/><path d="M594.6 52 L598.4 47.6" stroke="#d8d8d8" stroke-width="0.9"/><circle cx="599" cy="46.9" r="1.3" fill="#d89aa0"/><circle cx="603.9" cy="48.3" r="2.3" fill="#050505"/><rect x="624.9" y="50" width="3.2" height="2.6" rx="0.4" fill="#e0e0e0"/><path d="M625.6 50 V49 Q626.5 47.6 627.4 49" stroke="#bdbdbd" stroke-width="0.5" fill="none"/></svg>
<div style="left:633.5px;top:48px;width:34.5px;height:7.4px;background:#3c3c3c;border-radius:1px"></div>
<span class="t" style="left:635px;top:49px;font-size:4.0px;line-height:5px;color:#d8d8d8;font-weight:normal;">CMYK</span>
<span class="t" style="left:664.4px;top:49px;font-size:2.4px;line-height:5px;color:#9a9a9a;font-weight:normal;">˄</span>
<span class="t" style="left:664.4px;top:52px;font-size:2.4px;line-height:5px;color:#9a9a9a;font-weight:normal;">˅</span>
<span class="t" style="left:575.8px;top:65px;font-size:3.6px;line-height:5px;color:#8a8a8a;font-weight:normal;">C</span>
<div style="left:581px;top:64.7px;width:73.2px;height:2.4px;background:linear-gradient(90deg,#d9579a,#a35cb5 50%,#3a6fc0);border-radius:1.2px"></div>
<svg style="left:607.8px;top:63.7px;" width="4.4" height="4.4" viewBox="0 0 4.4 4.4"><circle cx="2.2" cy="2.2" r="1.75" fill="none" stroke="#e0e0e0" stroke-width="0.6"/></svg>
<div style="left:655.9px;top:62.800000000000004px;width:12.8px;height:6.2px;background:#262626;border-radius:0.8px"></div>
<span class="t" style="left:657.5px;top:64px;font-size:3.9px;line-height:5px;color:#cfcfcf;font-weight:normal;">40</span>
<span class="t" style="left:575.8px;top:73px;font-size:3.6px;line-height:5px;color:#8a8a8a;font-weight:normal;">M</span>
<div style="left:581px;top:72.7px;width:73.2px;height:2.4px;background:linear-gradient(90deg,#a8d8f2,#a890d0 50%,#b55ab8);border-radius:1.2px"></div>
<svg style="left:631.5px;top:71.7px;" width="4.4" height="4.4" viewBox="0 0 4.4 4.4"><circle cx="2.2" cy="2.2" r="1.75" fill="none" stroke="#e0e0e0" stroke-width="0.6"/></svg>
<div style="left:655.9px;top:70.80000000000001px;width:12.8px;height:6.2px;background:#262626;border-radius:0.8px"></div>
<span class="t" style="left:657.5px;top:72px;font-size:3.9px;line-height:5px;color:#cfcfcf;font-weight:normal;">74</span>
<span class="t" style="left:575.8px;top:81px;font-size:3.6px;line-height:5px;color:#8a8a8a;font-weight:normal;">Y</span>
<div style="left:581px;top:80.6px;width:73.2px;height:2.4px;background:linear-gradient(90deg,#a35cb5,#c57090 50%,#e08a50);border-radius:1.2px"></div>
<svg style="left:580.4px;top:79.6px;" width="4.4" height="4.4" viewBox="0 0 4.4 4.4"><circle cx="2.2" cy="2.2" r="1.75" fill="none" stroke="#e0e0e0" stroke-width="0.6"/></svg>
<div style="left:655.9px;top:78.7px;width:12.8px;height:6.2px;background:#262626;border-radius:0.8px"></div>
<span class="t" style="left:657.5px;top:80px;font-size:3.9px;line-height:5px;color:#cfcfcf;font-weight:normal;">0</span>
<span class="t" style="left:575.8px;top:88px;font-size:3.6px;line-height:5px;color:#8a8a8a;font-weight:normal;">K</span>
<div style="left:581px;top:88.5px;width:73.2px;height:2.4px;background:linear-gradient(90deg,#a35cb5,#60306a 55%,#000);border-radius:1.2px"></div>
<svg style="left:587.3px;top:87.5px;" width="4.4" height="4.4" viewBox="0 0 4.4 4.4"><circle cx="2.2" cy="2.2" r="1.75" fill="none" stroke="#e0e0e0" stroke-width="0.6"/></svg>
<div style="left:655.9px;top:86.60000000000001px;width:12.8px;height:6.2px;background:#262626;border-radius:0.8px"></div>
<span class="t" style="left:657.5px;top:87px;font-size:3.9px;line-height:5px;color:#cfcfcf;font-weight:normal;">16</span>
<div style="left:575.9px;top:95.6px;width:93.1px;height:8.8px;background:linear-gradient(180deg,rgba(255,255,255,0.95) 0%,rgba(255,255,255,0.25) 30%,rgba(255,255,255,0) 45%,rgba(0,0,0,0) 60%,rgba(0,0,0,0.85) 100%),linear-gradient(90deg,#e02828,#f0a030 10%,#f0e040 19%,#40c050 35%,#30c8d8 52%,#2040e0 68%,#c030d0 84%,#e02848);"></div>
<span class="t" style="left:576px;top:107px;font-size:3.8px;line-height:5px;color:#8a8a8a;font-weight:normal;">Opacity</span>
<svg style="left:576px;top:112.5px;" width="5.5" height="5.5" viewBox="0 0 5.5 5.5"><circle cx="2.8" cy="2.7" r="2.3" fill="#a35cb5" stroke="#5a3070" stroke-width="0.4"/></svg>
<div style="left:583.7px;top:114.2px;width:54px;height:2px;background:repeating-linear-gradient(90deg,#e8e8e8 0 1px,#888 1px 2px);border-radius:1px;opacity:0.9"></div>
<div style="left:620px;top:114.2px;width:18px;height:2px;background:linear-gradient(90deg,rgba(55,55,55,0),rgba(55,55,55,0.7));"></div>
<svg style="left:639px;top:112.6px;" width="5.2" height="5.2" viewBox="0 0 5.2 5.2"><circle cx="2.6" cy="2.6" r="1.8" fill="#2a2a2a" stroke="#ececec" stroke-width="0.7"/></svg>
<div style="left:647.4px;top:111.4px;width:21.8px;height:7.6px;background:#252525;border-radius:1px"></div>
<div style="left:664.6px;top:111.4px;width:0.5px;height:7.6px;background:#333;"></div>
<span class="t" style="left:649px;top:113px;font-size:3.95px;line-height:5px;color:#cfcfcf;font-weight:normal;">100 %</span>
<span class="t" style="left:665.6px;top:114px;font-size:3.2px;line-height:5px;color:#8a8a8a;font-weight:normal;">˅</span>
<div style="left:573.5px;top:120.5px;width:98.5px;height:1px;background:#1e1e1e;"></div>
<div style="left:573.5px;top:121.5px;width:98.5px;height:10.4px;background:#262626;"></div>
<div style="left:573.5px;top:122.5px;width:6px;height:9.4px;background:#212121;"></div>
<div style="left:576.2px;top:125.5px;width:0.6px;height:3.5px;background:#555;"></div>
<div style="left:579.9px;top:122.3px;width:15.9px;height:9.6px;background:#303030;border-radius:1px 1px 0 0"></div>
<span class="t" style="left:582px;top:125px;font-size:4.0px;line-height:5px;color:#e4e4e4;font-weight:normal;">Layers</span>
<span class="t" style="left:599px;top:125px;font-size:4.0px;line-height:5px;color:#8a8a8a;font-weight:normal;">Character</span>
<span class="t" style="left:627.7px;top:125px;font-size:4.0px;line-height:5px;color:#8a8a8a;font-weight:normal;">Par</span>
<span class="t" style="left:649.7px;top:125px;font-size:4.0px;line-height:5px;color:#8a8a8a;font-weight:normal;">TSt</span>
<svg style="left:664px;top:123.5px;" width="6" height="6" viewBox="0 0 6 6"><rect x="1" y="1" width="4" height="0.9" fill="#bdbdbd"/><rect x="1" y="2.55" width="4" height="0.9" fill="#bdbdbd"/><rect x="1" y="4.1" width="4" height="0.9" fill="#bdbdbd"/></svg>
<div style="left:573.5px;top:131.9px;width:98.5px;height:12px;background:#383838;"></div>
<span class="t" style="left:575px;top:136px;font-size:3.95px;line-height:5px;color:#8a8a8a;font-weight:normal;">Opacity:</span>
<div style="left:591.2px;top:134.6px;width:18.6px;height:7.6px;background:#232323;border-radius:1px"></div>
<span class="t" style="left:592.3px;top:136px;font-size:3.95px;line-height:5px;color:#d0d0d0;font-weight:normal;">100 %</span>
<span class="t" style="left:605.6px;top:137px;font-size:3.2px;line-height:5px;color:#8a8a8a;font-weight:normal;">˅</span>
<div style="left:611px;top:134.6px;width:42.5px;height:7.6px;background:#3c3c3c;border-radius:1px"></div>
<span class="t" style="left:613.4px;top:136px;font-size:3.95px;line-height:5px;color:#d0d0d0;font-weight:normal;">Normal</span>
<span class="t" style="left:649.8px;top:136px;font-size:2.4px;line-height:5px;color:#8a8a8a;font-weight:normal;">˄</span>
<span class="t" style="left:649.8px;top:138px;font-size:2.4px;line-height:5px;color:#8a8a8a;font-weight:normal;">˅</span>
<svg style="left:655.5px;top:135.3px;" width="7" height="7" viewBox="0 0 7 7"><circle cx="3.5" cy="3.5" r="1.9" fill="none" stroke="#d8d8d8" stroke-width="1" stroke-dasharray="0.8 0.5"/><circle cx="3.5" cy="3.5" r="0.7" fill="#d8d8d8"/></svg>
<svg style="left:663.5px;top:135px;" width="6" height="7.5" viewBox="0 0 6 7.5"><rect x="1.2" y="3.2" width="3.6" height="3.2" rx="0.5" fill="#dcdcdc"/><path d="M2 3.2 V2.2 Q3 0.9 4 2.2 V3.2" stroke="#cfcfcf" stroke-width="0.5" fill="none"/></svg>
<div style="left:573.5px;top:143.6px;width:98.5px;height:182.20000000000002px;background:#262626;"></div>
<div style="left:573.5px;top:145.0px;width:98.5px;height:13.0px;background:#333333;"></div>
<svg style="left:573px;top:148.54999999999998px;" width="6" height="6" viewBox="0 0 6 6"><path d="M1.6 1.2 L1.6 2.4 L2.8 2.4 M2.8 3.8 L2.8 5 L1.6 5 M4.2 1.6 L4.2 4.6" stroke="#bdbdbd" stroke-width="0.55" fill="none"/></svg>
<div style="left:579.8px;top:146.79999999999998px;width:12.5px;height:9.4px;background:#a85cb8;border-radius:2px"></div>
<span class="t" style="left:597px;top:150px;font-size:4.0px;line-height:5px;color:#666666;font-weight:normal;">Rounded Rectangle</span>
<svg style="left:661.7px;top:149.04999999999998px;" width="5" height="5" viewBox="0 0 5 5"><circle cx="2.5" cy="2.5" r="1.45" fill="#cfcfcf"/></svg>
<div style="left:573.5px;top:158.9px;width:98.5px;height:13.0px;background:#333333;"></div>
<svg style="left:573px;top:162.45px;" width="6" height="6" viewBox="0 0 6 6"><path d="M1.6 1.2 L1.6 2.4 L2.8 2.4 M2.8 3.8 L2.8 5 L1.6 5 M4.2 1.6 L4.2 4.6" stroke="#bdbdbd" stroke-width="0.55" fill="none"/></svg>
<div style="left:579.8px;top:160.7px;width:12.5px;height:9.4px;background:#a85cb8;border-radius:2px"></div>
<span class="t" style="left:597px;top:163px;font-size:4.0px;line-height:5px;color:#666666;font-weight:normal;">Rounded Rectangle</span>
<svg style="left:661.7px;top:162.95px;" width="5" height="5" viewBox="0 0 5 5"><circle cx="2.5" cy="2.5" r="1.45" fill="#cfcfcf"/></svg>
<div style="left:573.5px;top:172.8px;width:98.5px;height:13.0px;background:#333333;"></div>
<svg style="left:573px;top:176.35px;" width="6" height="6" viewBox="0 0 6 6"><path d="M1.6 1.2 L1.6 2.4 L2.8 2.4 M2.8 3.8 L2.8 5 L1.6 5 M4.2 1.6 L4.2 4.6" stroke="#bdbdbd" stroke-width="0.55" fill="none"/></svg>
<div style="left:579.8px;top:174.6px;width:12.5px;height:9.4px;background:#a85cb8;border-radius:2px"></div>
<span class="t" style="left:597px;top:177px;font-size:4.0px;line-height:5px;color:#666666;font-weight:normal;">Rounded Rectangle</span>
<svg style="left:661.7px;top:176.85px;" width="5" height="5" viewBox="0 0 5 5"><circle cx="2.5" cy="2.5" r="1.45" fill="#cfcfcf"/></svg>
<div style="left:573.5px;top:186.70000000000002px;width:98.5px;height:13.0px;background:#3a8ac2;"></div>
<svg style="left:573px;top:190.25px;" width="6" height="6" viewBox="0 0 6 6"><path d="M1.6 1.2 L1.6 2.4 L2.8 2.4 M2.8 3.8 L2.8 5 L1.6 5 M4.2 1.6 L4.2 4.6" stroke="#8ab0c8" stroke-width="0.55" fill="none"/></svg>
<div style="left:579.8px;top:188.5px;width:12.5px;height:9.4px;background:#7d8fe0;border-radius:2px"></div>
<span class="t" style="left:597px;top:191px;font-size:4.0px;line-height:5px;color:#62a0cc;font-weight:normal;">Rounded Rectangle</span>
<svg style="left:661.7px;top:190.75px;" width="5" height="5" viewBox="0 0 5 5"><circle cx="2.5" cy="2.5" r="1.45" fill="#a9d0ee"/></svg>
<div style="left:573.5px;top:200.6px;width:98.5px;height:13.0px;background:#333333;"></div>
<svg style="left:573px;top:204.14999999999998px;" width="6" height="6" viewBox="0 0 6 6"><path d="M1.6 1.2 L1.6 2.4 L2.8 2.4 M2.8 3.8 L2.8 5 L1.6 5 M4.2 1.6 L4.2 4.6" stroke="#bdbdbd" stroke-width="0.55" fill="none"/></svg>
<div style="left:579.8px;top:202.39999999999998px;width:12.5px;height:9.4px;background:#a85cb8;border-radius:2px"></div>
<span class="t" style="left:597px;top:205px;font-size:4.0px;line-height:5px;color:#666666;font-weight:normal;">Rounded Rectangle</span>
<svg style="left:661.7px;top:204.64999999999998px;" width="5" height="5" viewBox="0 0 5 5"><circle cx="2.5" cy="2.5" r="1.45" fill="#cfcfcf"/></svg>
<div style="left:573.5px;top:214.5px;width:98.5px;height:13.0px;background:#333333;"></div>
<svg style="left:573px;top:218.04999999999998px;" width="6" height="6" viewBox="0 0 6 6"><path d="M1.6 1.2 L1.6 2.4 L2.8 2.4 M2.8 3.8 L2.8 5 L1.6 5 M4.2 1.6 L4.2 4.6" stroke="#bdbdbd" stroke-width="0.55" fill="none"/></svg>
<div style="left:579.8px;top:215.7px;width:12.5px;height:10.5px;background:#262626;border-radius:1px"></div>
<svg style="left:582.8px;top:218.04999999999998px;" width="6.5" height="6" viewBox="0 0 6.5 6"><rect x="0.8" y="1" width="4.8" height="4" rx="0.8" fill="#e0c8d0" stroke="#9a6a80" stroke-width="0.4"/><rect x="1.6" y="1.8" width="3.2" height="2.4" rx="0.5" fill="#b070a0"/></svg>
<span class="t" style="left:649.6px;top:218.15px;font:italic 5.4px/6px 'Liberation Serif';color:#d0d0d0">fx</span>
<span class="t" style="left:597px;top:219px;font-size:4.0px;line-height:5px;color:#666666;font-weight:normal;">Rounded Rectangle</span>
<svg style="left:661.7px;top:218.54999999999998px;" width="5" height="5" viewBox="0 0 5 5"><circle cx="2.5" cy="2.5" r="1.45" fill="#cfcfcf"/></svg>
<div style="left:573.5px;top:228.4px;width:98.5px;height:13.0px;background:#333333;"></div>
<svg style="left:573px;top:231.95px;" width="6" height="6" viewBox="0 0 6 6"><path d="M1.6 1.2 L1.6 2.4 L2.8 2.4 M2.8 3.8 L2.8 5 L1.6 5 M4.2 1.6 L4.2 4.6" stroke="#bdbdbd" stroke-width="0.55" fill="none"/></svg>
<div style="left:579.8px;top:230.2px;width:12.5px;height:9.4px;background:#a85cb8;border-radius:2px"></div>
<span class="t" style="left:597px;top:233px;font-size:4.0px;line-height:5px;color:#666666;font-weight:normal;">Rounded Rectangle</span>
<svg style="left:661.7px;top:232.45px;" width="5" height="5" viewBox="0 0 5 5"><circle cx="2.5" cy="2.5" r="1.45" fill="#cfcfcf"/></svg>
<div style="left:573.5px;top:242.29999999999998px;width:98.5px;height:13.0px;background:#2f5d8d;"></div>
<svg style="left:573px;top:245.84999999999997px;" width="6" height="6" viewBox="0 0 6 6"><path d="M1.6 1.2 L1.6 2.4 L2.8 2.4 M2.8 3.8 L2.8 5 L1.6 5 M4.2 1.6 L4.2 4.6" stroke="#bdbdbd" stroke-width="0.55" fill="none"/></svg>
<div style="left:579.8px;top:243.49999999999997px;width:12.5px;height:10.5px;background:#24364a;border-radius:1px"></div>
<svg style="left:582.8px;top:245.84999999999997px;" width="6.5" height="6" viewBox="0 0 6.5 6"><rect x="0.8" y="1" width="4.8" height="4" rx="0.8" fill="#e0c8d0" stroke="#9a6a80" stroke-width="0.4"/><rect x="1.6" y="1.8" width="3.2" height="2.4" rx="0.5" fill="#b070a0"/></svg>
<span class="t" style="left:649.6px;top:245.95px;font:italic 5.4px/6px 'Liberation Serif';color:#d0d0d0">fx</span>
<span class="t" style="left:597px;top:247px;font-size:4.0px;line-height:5px;color:#5a7898;font-weight:normal;">Rounded Rectangle</span>
<svg style="left:661.7px;top:246.34999999999997px;" width="5" height="5" viewBox="0 0 5 5"><circle cx="2.5" cy="2.5" r="1.45" fill="#cfcfcf"/></svg>
<div style="left:573.5px;top:256.2px;width:98.5px;height:13.0px;background:#333333;"></div>
<svg style="left:573px;top:259.75px;" width="6" height="6" viewBox="0 0 6 6"><path d="M1.6 1.2 L1.6 2.4 L2.8 2.4 M2.8 3.8 L2.8 5 L1.6 5 M4.2 1.6 L4.2 4.6" stroke="#bdbdbd" stroke-width="0.55" fill="none"/></svg>
<div style="left:579.8px;top:258.0px;width:12.5px;height:9.4px;background:#a85cb8;border-radius:2px"></div>
<span class="t" style="left:597px;top:261px;font-size:4.0px;line-height:5px;color:#666666;font-weight:normal;">Rounded Rectangle</span>
<svg style="left:661.7px;top:260.25px;" width="5" height="5" viewBox="0 0 5 5"><circle cx="2.5" cy="2.5" r="1.45" fill="#cfcfcf"/></svg>
<div style="left:573.5px;top:270.09999999999997px;width:98.5px;height:13.0px;background:#333333;"></div>
<svg style="left:573px;top:273.65px;" width="6" height="6" viewBox="0 0 6 6"><path d="M1.6 1.2 L1.6 2.4 L2.8 2.4 M2.8 3.8 L2.8 5 L1.6 5 M4.2 1.6 L4.2 4.6" stroke="#bdbdbd" stroke-width="0.55" fill="none"/></svg>
<div style="left:579.8px;top:271.9px;width:12.5px;height:9.4px;background:#a85cb8;border-radius:2px"></div>
<span class="t" style="left:597px;top:275px;font-size:4.0px;line-height:5px;color:#666666;font-weight:normal;">Rounded Rectangle</span>
<svg style="left:661.7px;top:274.15px;" width="5" height="5" viewBox="0 0 5 5"><circle cx="2.5" cy="2.5" r="1.45" fill="#cfcfcf"/></svg>
<div style="left:573.5px;top:284.0px;width:98.5px;height:13.0px;background:#333333;"></div>
<svg style="left:573px;top:287.55px;" width="6" height="6" viewBox="0 0 6 6"><path d="M1.6 1.2 L1.6 2.4 L2.8 2.4 M2.8 3.8 L2.8 5 L1.6 5 M4.2 1.6 L4.2 4.6" stroke="#bdbdbd" stroke-width="0.55" fill="none"/></svg>
<div style="left:579.8px;top:285.8px;width:12.5px;height:9.4px;background:#a85cb8;border-radius:2px"></div>
<span class="t" style="left:597px;top:289px;font-size:4.0px;line-height:5px;color:#666666;font-weight:normal;">Rounded Rectangle</span>
<svg style="left:661.7px;top:288.05px;" width="5" height="5" viewBox="0 0 5 5"><circle cx="2.5" cy="2.5" r="1.45" fill="#cfcfcf"/></svg>
<div style="left:573.5px;top:297.9px;width:98.5px;height:13.0px;background:#333333;"></div>
<svg style="left:573px;top:301.45px;" width="6" height="6" viewBox="0 0 6 6"><path d="M1.6 1.2 L1.6 2.4 L2.8 2.4 M2.8 3.8 L2.8 5 L1.6 5 M4.2 1.6 L4.2 4.6" stroke="#bdbdbd" stroke-width="0.55" fill="none"/></svg>
<div style="left:579.8px;top:299.7px;width:12.5px;height:9.4px;background:#a85cb8;border-radius:2px"></div>
<span class="t" style="left:597px;top:302px;font-size:4.0px;line-height:5px;color:#666666;font-weight:normal;">Rounded Rectangle</span>
<svg style="left:661.7px;top:301.95px;" width="5" height="5" viewBox="0 0 5 5"><circle cx="2.5" cy="2.5" r="1.45" fill="#cfcfcf"/></svg>
<div style="left:573.5px;top:311.79999999999995px;width:98.5px;height:13.0px;background:#333333;"></div>
<svg style="left:572.5px;top:315.34999999999997px;" width="6" height="6" viewBox="0 0 6 6"><rect x="1" y="1.4" width="4" height="3.4" fill="none" stroke="#bdbdbd" stroke-width="0.5"/><path d="M1 3.1H5" stroke="#bdbdbd" stroke-width="0.5"/></svg>
<div style="left:578.8px;top:311.79999999999995px;width:0.8px;height:13.0px;background:#3fa57a;"></div>
<span class="t" style="left:597px;top:316px;font-size:4.0px;line-height:5px;color:#6a6a6a;font-weight:normal;">Master A - Right</span>
<svg style="left:661.7px;top:315.84999999999997px;" width="5" height="5" viewBox="0 0 5 5"><circle cx="2.5" cy="2.5" r="1.45" fill="#cfcfcf"/></svg>
<svg style="left:650.6px;top:195.8px;" width="6" height="8" viewBox="0 0 6 8"><path d="M1 1 L1 6.2 L2.3 5 L3.3 7 L4.1 6.7 L3.2 4.8 L4.9 4.7Z" fill="#111" stroke="#eee" stroke-width="0.45"/></svg>
<div style="left:573.5px;top:325.5px;width:98.5px;height:6.3px;background:#222222;"></div>
<div style="left:573.5px;top:331.8px;width:98.5px;height:13.4px;background:#383838;"></div>
<svg style="left:574.5px;top:335px;" width="7" height="7" viewBox="0 0 7 7"><rect x="1" y="1" width="3.8" height="3.8" rx="0.8" fill="none" stroke="#d0d0d0" stroke-width="0.6"/><rect x="2.4" y="2.4" width="3.6" height="3.6" rx="0.8" fill="#d0d0d0"/></svg>
<svg style="left:603px;top:335px;" width="7" height="7" viewBox="0 0 7 7"><rect x="0.8" y="0.8" width="5.4" height="5.4" fill="#dcdcdc"/><circle cx="3.5" cy="3.5" r="1.6" fill="#555"/></svg>
<svg style="left:610.7px;top:335px;" width="7" height="7" viewBox="0 0 7 7"><circle cx="3.5" cy="3.5" r="2.6" fill="none" stroke="#cfcfcf" stroke-width="0.6"/><path d="M2 5 L5 2" stroke="#cfcfcf" stroke-width="0.6"/></svg>
<span class="t" style="left:619.8px;top:335.2px;font:italic 5.6px/6px 'Liberation Serif';color:#cfcfcf">fx</span>
<svg style="left:654.5px;top:334.8px;" width="7" height="7.5" viewBox="0 0 7 7.5"><path d="M1.5 1 H4.3 L5.5 2.2 V6.5 H1.5Z" fill="none" stroke="#aaa" stroke-width="0.5"/><rect x="2.3" y="3" width="2.4" height="2.4" fill="#aaa"/></svg>
<svg style="left:663.5px;top:334.8px;" width="7" height="7.5" viewBox="0 0 7 7.5"><rect x="1.6" y="2" width="3.8" height="4.6" rx="0.4" fill="none" stroke="#9a9a9a" stroke-width="0.5"/><path d="M1.2 1.5H5.8" stroke="#9a9a9a" stroke-width="0.5"/></svg>
<div style="left:573.5px;top:345px;width:98.5px;height:0.8px;background:#1e1e1e;"></div>
<div style="left:573.5px;top:345.4px;width:98.5px;height:10.6px;background:#262626;"></div>
<div style="left:573.5px;top:346.2px;width:6px;height:9.8px;background:#212121;"></div>
<div style="left:576.2px;top:349.4px;width:0.6px;height:3.5px;background:#555;"></div>
<span class="t" style="left:582.2px;top:349px;font-size:3.95px;line-height:5px;color:#8a8a8a;font-weight:normal;">Transform</span>
<div style="left:602.3px;top:347.5px;width:0.6px;height:7.5px;background:#2b2b2b;"></div>
<span class="t" style="left:605px;top:349px;font-size:3.95px;line-height:5px;color:#8a8a8a;font-weight:normal;">Navigator</span>
<div style="left:625px;top:346.2px;width:17.5px;height:9.8px;background:#303030;border-radius:1px 1px 0 0"></div>
<span class="t" style="left:627px;top:349px;font-size:4.0px;line-height:5px;color:#e4e4e4;font-weight:normal;">History</span>
<svg style="left:663.5px;top:347.8px;" width="6" height="6" viewBox="0 0 6 6"><rect x="1" y="1" width="4" height="0.9" fill="#bdbdbd"/><rect x="1" y="2.55" width="4" height="0.9" fill="#bdbdbd"/><rect x="1" y="4.1" width="4" height="0.9" fill="#bdbdbd"/></svg>
<div style="left:573.5px;top:356px;width:98.5px;height:12px;background:#383838;"></div>
<span class="t" style="left:576.3px;top:360px;font-size:3.95px;line-height:5px;color:#8a8a8a;font-weight:normal;">Position:</span>
<div style="left:596.8px;top:361.1px;width:68px;height:1.8px;background:linear-gradient(90deg,#5a6f8a,#7890b0);border-radius:1px"></div>
<svg style="left:661.6px;top:359.6px;" width="5" height="5" viewBox="0 0 5 5"><circle cx="2.5" cy="2.5" r="1.7" fill="#f4f4f4"/></svg>
<div style="left:573.5px;top:368px;width:93px;height:44px;background:#1d1d1d;"></div>
<div style="left:666.5px;top:368px;width:5.5px;height:44px;background:#2a2a2a;"></div>
<div style="left:668.5px;top:403px;width:2.2px;height:6.5px;background:#6a6a6a;border-radius:1px"></div>
<span class="t" style="left:575px;top:369px;font-size:3.85px;line-height:5px;color:#d8d8d8;font-weight:normal;">Set effect offset / angle</span>
<span class="t" style="left:575px;top:376px;font-size:3.85px;line-height:5px;color:#d8d8d8;font-weight:normal;">Set effect compression</span>
<span class="t" style="left:575px;top:383px;font-size:3.85px;line-height:5px;color:#d8d8d8;font-weight:normal;">Set effect radius</span>
<div style="left:573.5px;top:389.95px;width:93px;height:6.6px;background:#3a5f91;"></div>
<span class="t" style="left:575px;top:391px;font-size:3.85px;line-height:5px;color:#e8eef6;font-weight:normal;">Add all filter effects</span>
<span class="t" style="left:575px;top:398px;font-size:3.85px;line-height:5px;color:#d8d8d8;font-weight:normal;">Move</span>
<span class="t" style="left:575px;top:406px;font-size:3.85px;line-height:5px;color:#d8d8d8;font-weight:normal;">Add all filter effects</span>
<div style="left:0px;top:411.7px;width:672px;height:8.3px;background:#2d2d2d;"></div>
<svg style="left:3px;top:413px;" width="7" height="6" viewBox="0 0 7 6"><path d="M1.5 1 V5 M5.5 1 L2.5 3 L5.5 5Z" fill="#555" stroke="#555" stroke-width="0.4"/></svg>
<svg style="left:10.5px;top:413px;" width="6" height="6" viewBox="0 0 6 6"><path d="M4.5 1 L1.5 3 L4.5 5Z" fill="#555"/></svg>
<div style="left:18px;top:412.3px;width:37px;height:7.4px;background:#222222;border-radius:1px"></div>
<span class="t" style="left:30.5px;top:414px;font-size:4.0px;line-height:5px;color:#c8c8c8;font-weight:normal;">1 of 3</span>
<svg style="left:53px;top:413px;" width="6" height="6" viewBox="0 0 6 6"><path d="M1.8 1 L4.8 3 L1.8 5Z" fill="#e8e8e8"/></svg>
<svg style="left:60px;top:413px;" width="7" height="6" viewBox="0 0 7 6"><path d="M1.5 1 L4.3 3 L1.5 5Z M4.6 1 V5" fill="#e0e0e0" stroke="#e0e0e0" stroke-width="0.5"/></svg>
<svg style="left:67.5px;top:412.6px;" width="7" height="7" viewBox="0 0 7 7"><rect x="1.2" y="1" width="4.6" height="5.2" fill="#8a8a8a"/><rect x="2" y="2" width="3" height="2" fill="#cfcfcf"/></svg>
<svg style="left:77.5px;top:412.6px;" width="7" height="7" viewBox="0 0 7 7"><rect x="1.2" y="0.8" width="4.6" height="5.6" rx="0.5" fill="#2aa07a"/><rect x="2.2" y="2" width="2.6" height="3" fill="#8fe0c0"/></svg>
<span class="t" style="left:88px;top:414.45px;font-size:4.08px;line-height:4.90px;color:#9a9a9a">‘Rounded Rectangle’ selected. <b style="color:#f2f2f2">Drag</b> to move selection. <b style="color:#f2f2f2">Click</b> another object to select it. <b style="color:#f2f2f2">Click</b> on an empty area to deselect selection.</span>
</body></html>
